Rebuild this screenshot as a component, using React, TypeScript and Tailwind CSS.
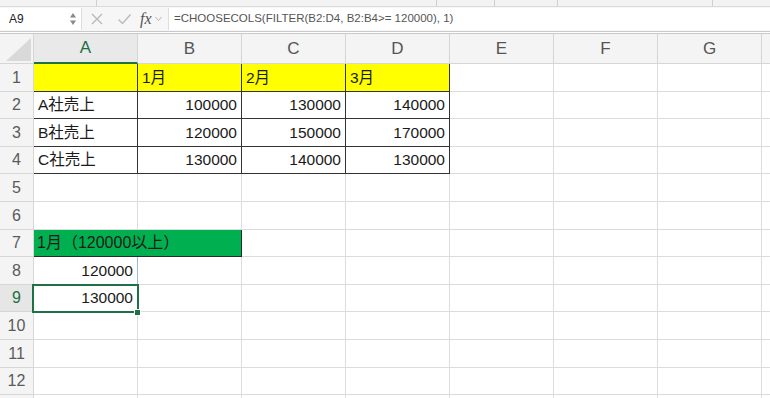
import React from 'react';

const COLS = ['A', 'B', 'C', 'D', 'E', 'F', 'G'];
const ROW_H = [
  'h-[28px]', 'h-[27px]', 'h-[28px]', 'h-[27px]', 'h-[28px]', 'h-[28px]',
  'h-[27px]', 'h-[28px]', 'h-[27px]', 'h-[28px]', 'h-[28px]', 'h-[27px]',
];

type Cell = { text?: string; align?: 'l' | 'r'; cls?: string };

const dark = 'border-r-[#333] border-b-[#333]';
const yellow = `bg-[#ffff00] ${dark}`;

// row index (1-based) -> col index -> cell
const DATA: Record<number, Record<number, Cell>> = {
  1: { 0: { cls: yellow }, 1: { text: '1月', cls: yellow }, 2: { text: '2月', cls: yellow }, 3: { text: '3月', cls: yellow } },
  2: { 0: { text: 'A社売上', cls: dark }, 1: { text: '100000', align: 'r', cls: dark }, 2: { text: '130000', align: 'r', cls: dark }, 3: { text: '140000', align: 'r', cls: dark } },
  3: { 0: { text: 'B社売上', cls: dark }, 1: { text: '120000', align: 'r', cls: dark }, 2: { text: '150000', align: 'r', cls: dark }, 3: { text: '170000', align: 'r', cls: dark } },
  4: { 0: { text: 'C社売上', cls: dark }, 1: { text: '130000', align: 'r', cls: dark }, 2: { text: '140000', align: 'r', cls: dark }, 3: { text: '130000', align: 'r', cls: dark } },
  8: { 0: { text: '120000', align: 'r', cls: 'border-r-[#9db8e0]' } },
  9: { 0: { text: '130000', align: 'r' } },
};

function GridCell({ cell }: { cell?: Cell }) {
  return (
    <div
      className={`w-[104px] shrink-0 h-full border-r border-b border-[#dcdcdc] flex items-center px-[4px] ${
        cell?.align === 'r' ? 'justify-end' : 'justify-start'
      } ${cell?.cls ?? ''}`}
    >
      {cell?.text && <span className="whitespace-nowrap">{cell.text}</span>}
    </div>
  );
}

function Row({ r, h }: { r: number; h: string }) {
  const selected = r === 9;
  const cells: React.ReactNode[] = [];
  if (r === 7) {
    cells.push(
      <div
        key="m"
        className="w-[208px] shrink-0 h-full bg-[#00b050] border-r border-b border-[#2a2a2a] flex items-center px-[3px]"
      >
        <span className="whitespace-nowrap text-[16px]">1月（120000以上）</span>
      </div>
    );
    for (let c = 2; c < 7; c++) cells.push(<GridCell key={c} />);
  } else {
    for (let c = 0; c < 7; c++) cells.push(<GridCell key={c} cell={DATA[r]?.[c]} />);
  }
  return (
    <div className={`flex ${h} relative ${selected ? 'z-10' : ''}`}>
      <div
        className={`w-[34px] shrink-0 h-full border-r border-b border-[#d6d6d6] flex items-center justify-center text-[16px] ${
          selected ? 'bg-[#e6e6e6] text-[#1d7044]' : 'bg-[#f4f4f4] text-[#5a5a5a]'
        }`}
      >
        {r}
      </div>
      {cells}
      <div className="flex-1 h-full border-b border-[#dcdcdc]" />
      {selected && (
        <>
          <div className="absolute left-[32px] top-[-1px] w-[107px] h-[29px] border-2 border-[#1e7145] pointer-events-none" />
          <div className="absolute left-[134px] top-[24px] w-[7px] h-[7px] bg-[#1e7145] border border-white" />
        </>
      )}
    </div>
  );
}

export default function App() {
  return (
    <div
      className="w-[770px] h-[398px] overflow-hidden bg-white text-[15.5px] text-[#1a1a1a]"
      style={{ fontFamily: '"Liberation Sans", "Noto Sans CJK JP", sans-serif' }}
    >
      {/* toolbar remnant */}
      <div className="h-[7px] bg-[#f3f3f3] border-b border-[#dadada] flex">
        <div className="w-[97px] border-r border-[#cfcfcf]" />
        <div className="w-[340px] border-r border-[#cfcfcf]" />
        <div className="w-[58px] border-r border-[#cfcfcf]" />
        <div className="w-[63px] border-r border-[#cfcfcf]" />
        <div className="w-[155px] border-r border-[#cfcfcf]" />
      </div>

      {/* formula bar */}
      <div className="h-[24px] flex bg-[#f6f6f6] text-[12px]">
        <div className="w-[82px] h-[22px] mt-[1px] bg-white flex items-center justify-between pl-[9px] pr-[4px] border-r border-[#dedede]">
          <span className="text-[#222]">A9</span>
          <svg width="8" height="16" viewBox="0 0 8 16">
            <path d="M4 2 L7 6.5 L1 6.5 Z" fill="#8a8a8a" />
            <path d="M4 14 L7 9.5 L1 9.5 Z" fill="#8a8a8a" />
          </svg>
        </div>
        <div className="w-[86px] flex items-center">
          <svg className="ml-[8px]" width="14" height="14" viewBox="0 0 14 14">
            <path d="M2 2 L12 12 M12 2 L2 12" stroke="#b9b9b9" strokeWidth="1.4" />
          </svg>
          <svg className="ml-[13px]" width="15" height="14" viewBox="0 0 15 14">
            <path d="M1.5 7.5 L5.5 11.5 L13.5 2.5" stroke="#b9b9b9" strokeWidth="1.4" fill="none" />
          </svg>
          <span
            className="ml-[8px] text-[16px] italic text-[#555]"
            style={{ fontFamily: '"Liberation Serif", serif' }}
          >
            fx
          </span>
          <svg className="ml-[3px]" width="7" height="6" viewBox="0 0 7 6">
            <path d="M0.5 1 L3.5 4.5 L6.5 1" stroke="#b5b5b5" strokeWidth="1" fill="none" />
          </svg>
        </div>
        <div className="flex-1 h-[22px] mt-[1px] bg-white border-l border-[#dedede] flex items-center pl-[5px] text-[#555] text-[11.5px]">
          =CHOOSECOLS(FILTER(B2:D4, B2:B4&gt;= 120000), 1)
        </div>
      </div>
      <div className="h-[3px] border-t border-b border-[#c9c9c9] bg-white" />

      {/* column headers */}
      <div className="flex h-[30px]">
        <div className="w-[34px] shrink-0 h-full bg-[#f4f4f4] border-r border-b border-[#d6d6d6] relative">
          <svg className="absolute left-0 top-0" width="33" height="29" viewBox="0 0 33 29">
            <path d="M6 27 L31 27 L31 4 Z" fill="#d9d9d9" />
          </svg>
        </div>
        {COLS.map((c) => (
          <div
            key={c}
            className={`w-[104px] shrink-0 h-full flex items-center justify-center text-[17px] border-r ${
              c === 'A'
                ? 'bg-[#e9e9e9] text-[#1d7044] border-b-2 border-b-[#1e7145] border-r-[#d6d6d6]'
                : 'bg-[#f4f4f4] text-[#555] border-b border-[#d6d6d6]'
            }`}
          >
            {c}
          </div>
        ))}
        <div className="flex-1 h-full bg-[#f4f4f4] border-b border-[#d6d6d6]" />
      </div>

      {/* rows */}
      {ROW_H.map((h, i) => (
        <Row key={i} r={i + 1} h={h} />
      ))}
      <div className="flex h-[3px]">
        <div className="w-[34px] shrink-0 h-full bg-[#f4f4f4] border-r border-[#d6d6d6]" />
        {COLS.map((c) => (
          <div key={c} className="w-[104px] shrink-0 h-full border-r border-[#dcdcdc]" />
        ))}
      </div>
    </div>
  );
}
